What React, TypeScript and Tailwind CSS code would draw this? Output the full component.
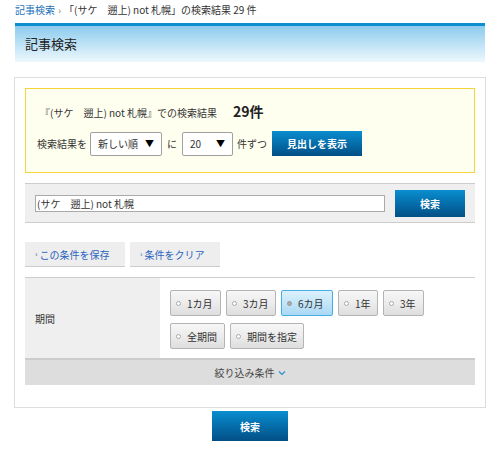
import React from "react";

const font = { fontFamily: '"Noto Sans CJK JP", "Noto Sans", "Liberation Sans", sans-serif' };

function PeriodBtn({ label, active, w }: { label: string; active?: boolean; w: string }) {
  return (
    <div
      className={
        "h-[26px] flex items-center rounded-[2px] border text-[10px] text-[#333] " +
        w +
        (active
          ? " border-[#45aee6] bg-gradient-to-b from-[#dcf1fc] to-[#a9d9f4]"
          : " border-[#b4b4b4] bg-gradient-to-b from-[#f7f7f7] via-[#ececec] to-[#dedede]")
      }
    >
      <span
        className={
          "ml-[5px] mr-[6px] inline-block w-[5px] h-[5px] rounded-full border " +
          (active ? "border-[#999] bg-[#aaa]" : "border-[#aaa] bg-white")
        }
      />
      <span>{label}</span>
    </div>
  );
}

function Select({ value, w }: { value: string; w: string }) {
  return (
    <div
      className={
        "h-[24px] flex items-center justify-between bg-white border border-[#a0a0a0] rounded-[2px] px-[7px] text-[10px] text-[#333] " +
        w
      }
    >
      <span>{value}</span>
      <span className="text-[9px] text-black">▼</span>
    </div>
  );
}

export default function App() {
  return (
    <div className="w-[500px] h-[449px] bg-white overflow-hidden text-[#333]" style={font}>
      {/* breadcrumb */}
      <div className="h-[23px] pl-[15px] pt-[3px] text-[10px] leading-[14px] flex items-start">
        <span className="text-[#1a70b8]">記事検索</span>
        <span className="text-[#888] mx-[3px]">›</span>
        <span>「(サケ　遡上) not 札幌」の検索結果 29 件</span>
      </div>
      {/* header */}
      <div className="mx-[15px] h-[39px] border-t-[3px] border-[#0b8fd1] bg-gradient-to-b from-[#8ccbed] to-[#edf8fd] flex items-center pl-[10px]">
        <span className="text-[13px] text-[#222]">記事検索</span>
      </div>
      {/* panel */}
      <div className="mx-[14px] mt-[15px] h-[331px] border border-[#dddddd] px-[10px] pt-[10px]">
        {/* yellow */}
        <div className="h-[85px] border border-[#f3d43a] bg-[#fffff0] pl-[11px] pt-[12px]">
          <div className="flex items-baseline text-[10px] pl-[3px]">
            <span>『(サケ　遡上) not 札幌』での検索結果</span>
            <span className="ml-[16px] text-[14px] font-bold text-[#222]">29件</span>
          </div>
          <div className="flex items-center mt-[9px] text-[10px]">
            <span className="mr-[3px]">検索結果を</span>
            <Select value="新しい順" w="w-[72px]" />
            <span className="mx-[5px]">に</span>
            <Select value="20" w="w-[51px]" />
            <span className="ml-[4px] mr-[5px]">件ずつ</span>
            <div className="w-[90px] h-[25px] flex items-center justify-center bg-gradient-to-b from-[#0a8ed0] to-[#034f86] text-white text-[10px] font-bold">
              見出しを表示
            </div>
          </div>
        </div>
        {/* search row */}
        <div className="mt-[10px] h-[40px] bg-[#efefef] border-y border-[#cccccc] flex items-center pl-[10px] pr-[10px]">
          <div className="w-[350px] h-[17px] bg-white border border-[#aaaaaa] flex items-center text-[10px] pl-[1px]">
            (サケ　遡上) not 札幌
          </div>
          <div className="ml-[10px] w-[70px] h-[27px] flex items-center justify-center bg-gradient-to-b from-[#0a8ed0] to-[#034f86] text-white text-[10px] font-bold">
            検索
          </div>
        </div>
        {/* condition buttons */}
        <div className="mt-[19px] flex gap-[5px]">
          <div className="w-[100px] h-[25px] bg-[#eeeeee] border-b border-[#cccccc] flex items-center pl-[10px] text-[10px] text-[#2a63c0]">
            <span className="text-[8px] mr-[2px]">›</span>この条件を保存
          </div>
          <div className="w-[90px] h-[25px] bg-[#eeeeee] border-b border-[#cccccc] flex items-center pl-[10px] text-[10px] text-[#2a63c0]">
            <span className="text-[8px] mr-[2px]">›</span>条件をクリア
          </div>
        </div>
        {/* table */}
        <div className="mt-[10px] border-t border-[#cccccc] flex h-[83px] border-b-2 border-b-[#cccccc]">
          <div className="w-[135px] bg-[#efefef] flex items-center pl-[10px] text-[10px]">期間</div>
          <div className="flex-1 bg-white pl-[10px] pt-[12px] flex flex-col gap-[7px]">
            <div className="flex gap-[5px]">
              <PeriodBtn label="1カ月" w="w-[51px]" />
              <PeriodBtn label="3カ月" w="w-[50px]" />
              <PeriodBtn label="6カ月" w="w-[52px]" active />
              <PeriodBtn label="1年" w="w-[40px]" />
              <PeriodBtn label="3年" w="w-[41px]" />
            </div>
            <div className="flex gap-[5px]">
              <PeriodBtn label="全期間" w="w-[55px]" />
              <PeriodBtn label="期間を指定" w="w-[74px]" />
            </div>
          </div>
        </div>
        <div className="h-[25px] bg-[#dddddd] flex items-center justify-center text-[10px] text-[#444]">
          絞り込み条件
          <svg className="ml-[3px]" width="8" height="6" viewBox="0 0 8 6">
            <path d="M1 1.5 L4 4.5 L7 1.5" stroke="#2a8fd0" strokeWidth="1.2" fill="none" />
          </svg>
        </div>
      </div>
      {/* bottom button */}
      <div className="mt-[3px] flex justify-center">
        <div className="w-[76px] h-[30px] flex items-center justify-center bg-gradient-to-b from-[#0a8ed0] to-[#034f86] text-white text-[10px] font-bold">
          検索
        </div>
      </div>
    </div>
  );
}
